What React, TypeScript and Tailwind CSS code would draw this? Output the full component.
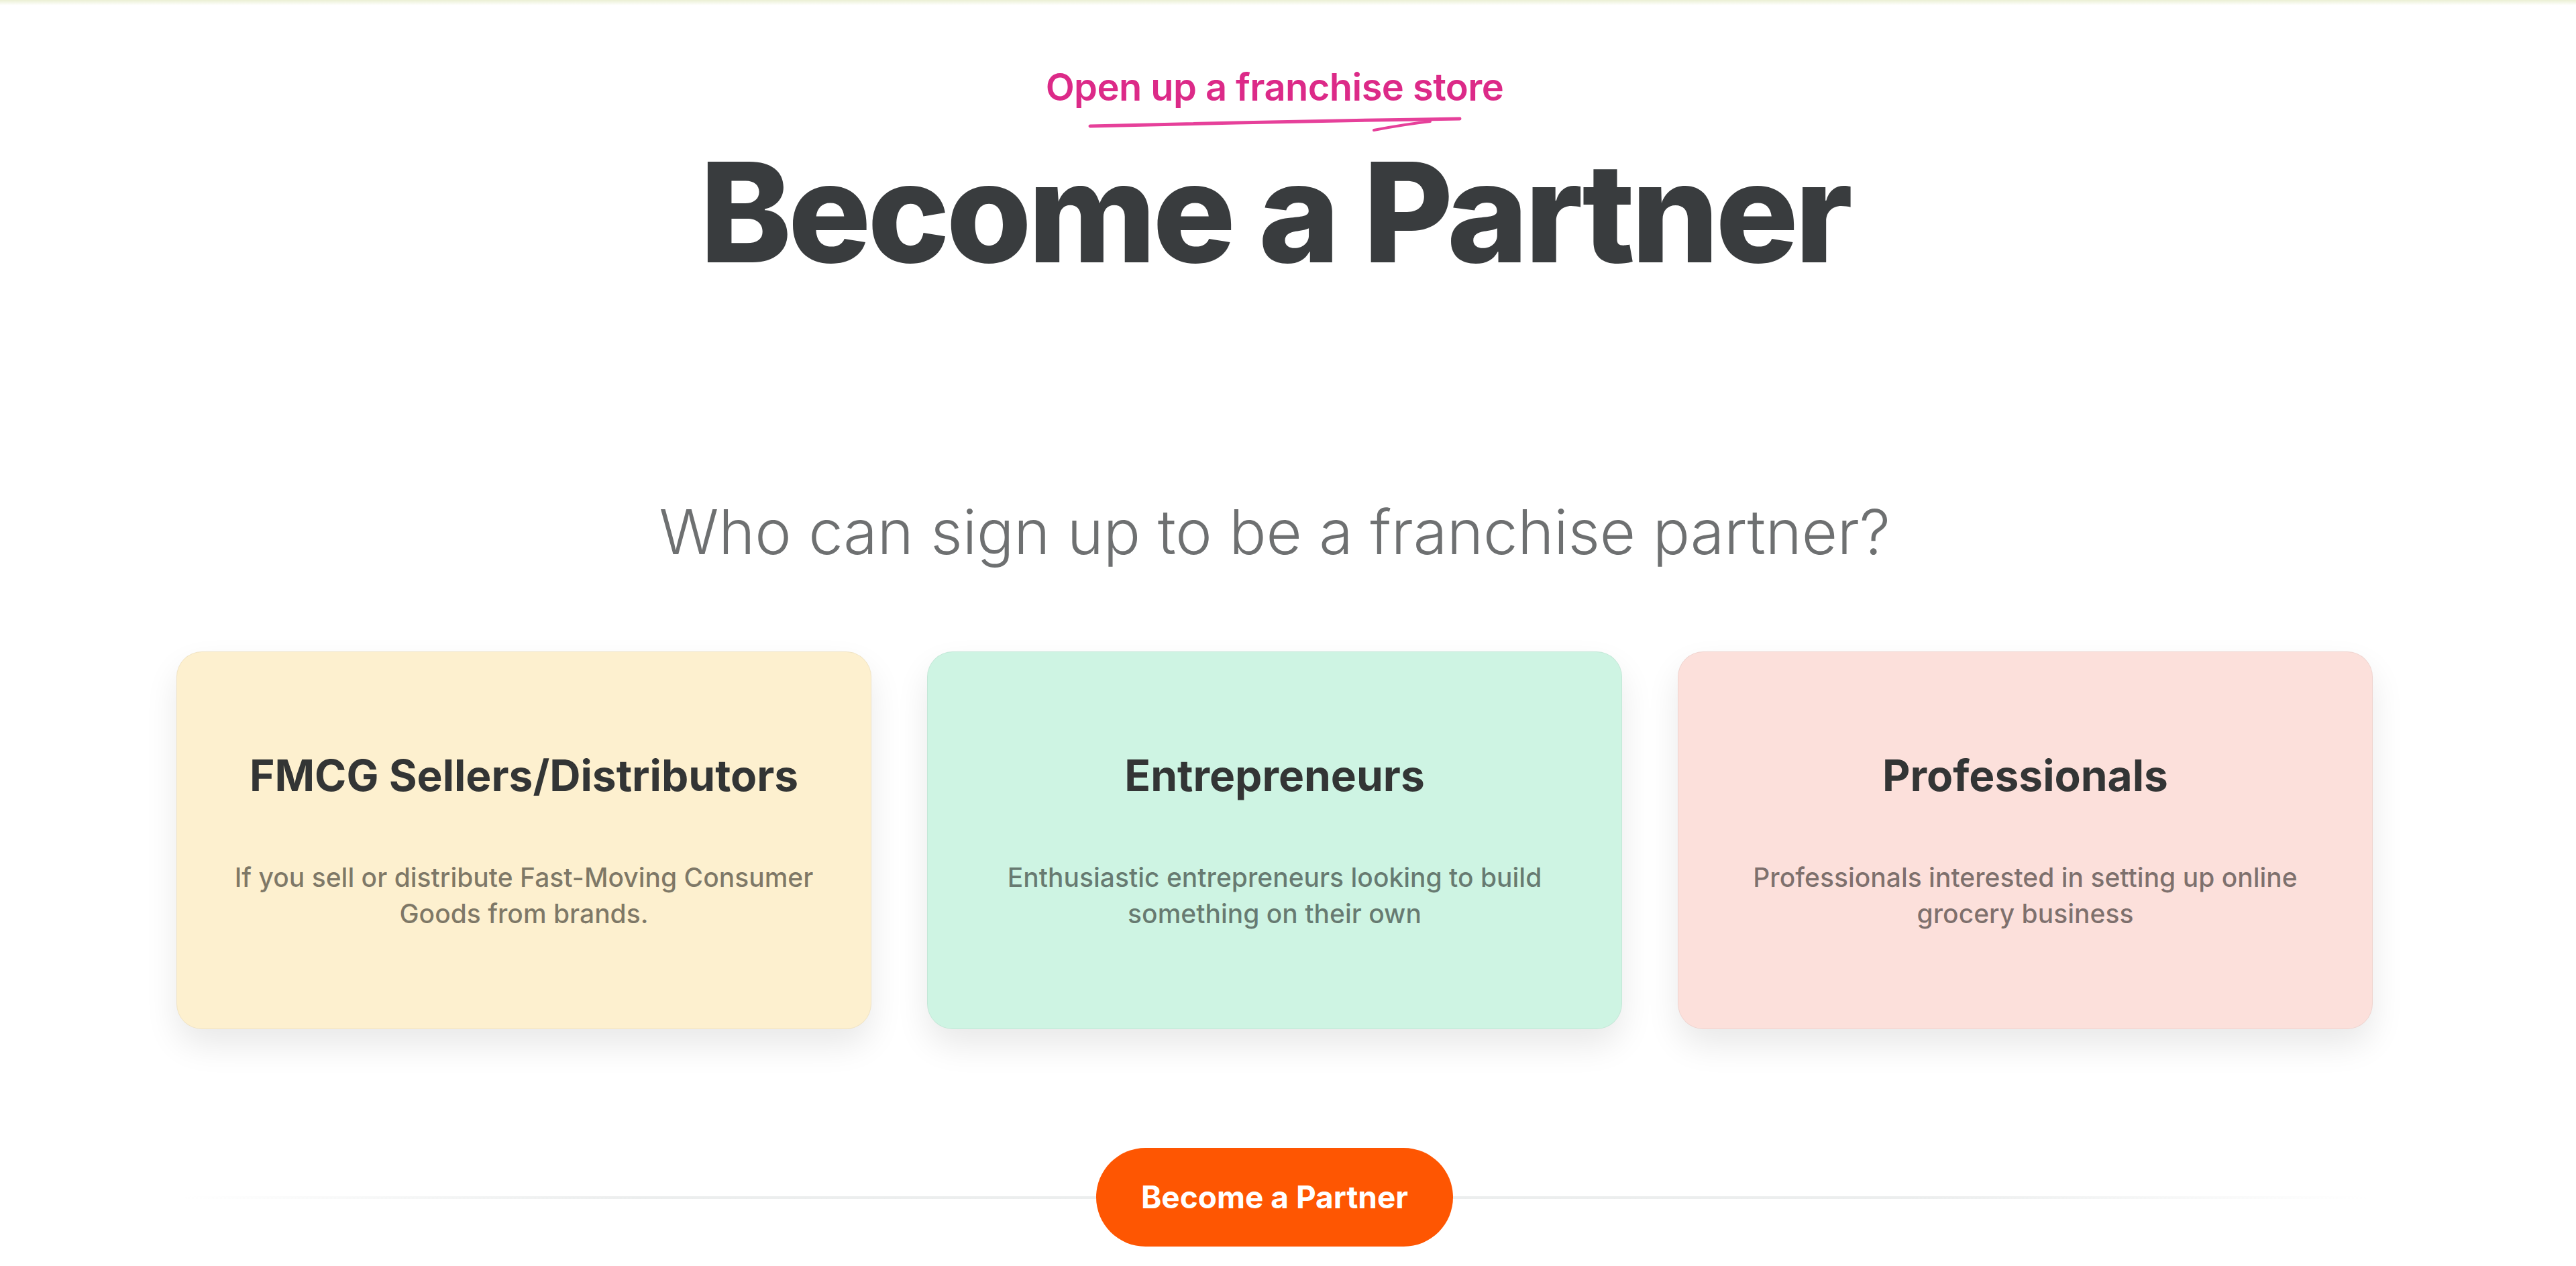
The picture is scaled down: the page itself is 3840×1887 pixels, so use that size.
import React from "react";

const cards = [
    {
        title: "FMCG Sellers/Distributors",
        text: ["If you sell or distribute Fast-Moving Consumer", "Goods from brands."],
        bg: "bg-[#fdf0cf]",
    },
    {
        title: "Entrepreneurs",
        text: ["Enthusiastic entrepreneurs looking to build", "something on their own"],
        bg: "bg-[#cef4e3]",
    },
    {
        title: "Professionals",
        text: ["Professionals interested in setting up online", "grocery business"],
        bg: "bg-[#fce0db]",
    },
];

function Swoosh() {
    return (
        <svg width="560" height="26" viewBox="0 0 560 26" fill="none" className="block">
            <path d="M5 16 Q 290 9 556 5" stroke="#e6409a" strokeWidth="5" strokeLinecap="round" />
            <path d="M428 22 Q 475 13 512 9" stroke="#e6409a" strokeWidth="4" strokeLinecap="round" />
        </svg>
    );
}

export default function App() {
    return (
        <div className="w-full h-[1887px] bg-white overflow-hidden font-['Inter',sans-serif]">
            {/* faint strip at the top edge */}
            <div className="h-[8px] w-full bg-gradient-to-b from-[#ebf0d4] to-white" />

            <div className="flex flex-col items-center pr-[40px]">
                {/* tagline */}
                <div className="mt-[94px] flex flex-col items-center">
                    <span className="text-[56px] leading-none font-semibold text-[#dc2a88] tracking-[-0.01em]">
                        Open up a franchise store
                    </span>
                    <div className="mt-[14px]">
                        <Swoosh />
                    </div>
                </div>

                <h1 className="mt-[15px] text-[206px] leading-none font-extrabold text-[#393c3e] tracking-[-0.026em]">
                    Become a Partner
                </h1>

                <h2 className="mt-[328px] text-[92px] leading-none font-light text-[#6e7071] tracking-[-0.002em]">
                    Who can sign up to be a franchise partner?
                </h2>

                {/* who can join */}
                <div className="mt-[132px] flex gap-[83px]">
                    {cards.map((card) => (
                        <div
                            key={card.title}
                            className={`w-[1036px] h-[563px] rounded-[38px] border border-black/5 ${card.bg} shadow-[0_24px_50px_rgba(0,0,0,0.09)] flex flex-col items-center pt-[148px]`}
                        >
                            <h3 className="text-[64px] leading-[72px] font-bold text-[#333535]">
                                {card.title}
                            </h3>
                            <p className="mt-[89px] text-[39px] leading-[54px] font-medium text-black/50 text-center">
                                {card.text[0]}
                                <br />
                                {card.text[1]}
                            </p>
                        </div>
                    ))}
                </div>

                {/* call to action over a faint rule */}
                <div className="mt-[177px] w-[3260px] flex items-center">
                    <div className="flex-1 h-[4px] bg-gradient-to-r from-transparent via-[#eceeee] to-[#eceeee]" />
                    <button className="w-[532px] h-[147px] rounded-full bg-[#fe5602] text-white text-[46px] font-bold">
                        Become a Partner
                    </button>
                    <div className="flex-1 h-[4px] bg-gradient-to-l from-transparent via-[#eceeee] to-[#eceeee]" />
                </div>
            </div>
        </div>
    );
}
